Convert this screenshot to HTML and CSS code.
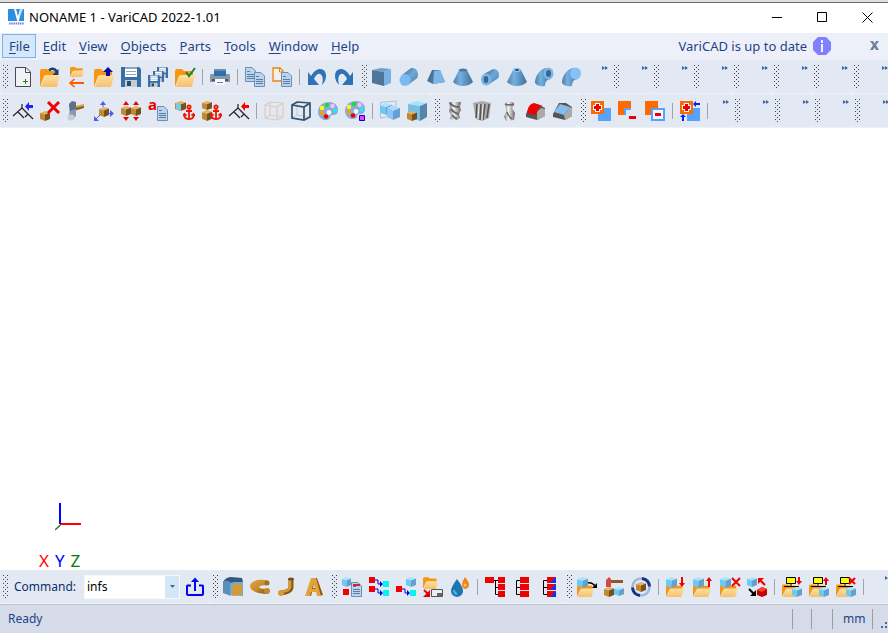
FILE: index.html
```html
<!DOCTYPE html>
<html lang="en">
<head>
<meta charset="utf-8">
<title>NONAME 1 - VariCAD 2022-1.01</title>
<link rel="stylesheet" href="styles.css">
</head>
<body>
<svg class="defs" width="0" height="0" aria-hidden="true">
  <defs>
    <linearGradient id="g-steel"><stop offset="0" stop-color="#4f7fa8"/><stop offset=".35" stop-color="#74b0e2"/><stop offset="1" stop-color="#456f94"/></linearGradient>
    <linearGradient id="g-steel-d" x1="0" y1="0" x2="1" y2="1"><stop offset="0" stop-color="#3f678a"/><stop offset=".5" stop-color="#6ea9da"/><stop offset="1" stop-color="#4a7aa3"/></linearGradient>
    <linearGradient id="g-gold" x1="0" y1="0" x2="1" y2="1"><stop offset="0" stop-color="#e6a945"/><stop offset=".5" stop-color="#c98a2b"/><stop offset="1" stop-color="#7c5010"/></linearGradient>
    <linearGradient id="g-metal"><stop offset="0" stop-color="#777"/><stop offset=".4" stop-color="#f4f4f4"/><stop offset="1" stop-color="#666"/></linearGradient>
    <linearGradient id="g-fold" x1="0" y1="0" x2="0" y2="1"><stop offset="0" stop-color="#fde0a0"/><stop offset="1" stop-color="#f7bf6c"/></linearGradient>
    <symbol id="folder" viewBox="0 0 20 20" preserveAspectRatio="none"><path d="M0 20V4l1-2h6l2 2h9v5H4z" fill="#f7960f"/><path d="M5 8h15l-3 12H1z" fill="url(#g-fold)"/></symbol>
    <symbol id="cube" viewBox="0 0 10 10" preserveAspectRatio="none"><path d="M0 2l5-2 5 1.500-5 2z" fill="#a6e6ff"/><path d="M0 2l5 1.500V10L0 8z" fill="#6cc8f4"/><path d="M5 3.500l5-2V8l-5 2z" fill="#68a0cc"/></symbol>
    <symbol id="brown" viewBox="0 0 10 10" preserveAspectRatio="none"><path d="M0 2l5-2 5 1.500-5 2z" fill="#e2b263"/><path d="M0 2l5 1.500V10L0 8z" fill="#c18a32"/><path d="M5 3.500l5-2V8l-5 2z" fill="#74501c"/></symbol>
    <symbol id="sheet" viewBox="0 0 11 15"><path d="M.5.5h6.500l3.500 3.500v10.500H.5z" fill="#bcd3ea" stroke="#6a8fb8"/><path d="M2 4.500h3M2 7.500h7M2 9.500h7M2 11.500h7" stroke="#557da8"/></symbol>
    <symbol id="anchor" viewBox="0 0 12 16"><g fill="none" stroke="#f01400" stroke-width="1.800"><circle cx="6" cy="2.500" r="1.600"/><path d="M6 4v11M3 6.500h6M1.500 9.500v2.500q1 2.700 4.500 2.700t4.500-2.700V9.500"/><path d="M0 11.500l1.500-2 2 1.500M12 11.500l-1.500-2-2 1.500"/></g></symbol>
    <symbol id="disk" viewBox="0 0 20 20"><path d="M0 0h18l2 2v18H0z" fill="#386fa5"/><path d="M4 0h12v10H4z" fill="#fff"/><path d="M4 0h12v2H4zM5 4h10v1H5zM5 7h10v1H5z" fill="#8fa6bb"/><path d="M4 13h12v7H4z" fill="#c5ccd2"/><path d="M6 14h4v5H6z" fill="#264e75"/></symbol>
    <symbol id="palette" viewBox="0 0 20 18" preserveAspectRatio="none"><path d="M0 10C0 4 5 0 11 0s9 4 9 8-2 5-5 5-3 2-3 3-3 3-6 2-6-4-6-8z" fill="#87acd9"/><circle cx="9" cy="3" r="2" fill="#12e312"/><circle cx="14.500" cy="4" r="2.200" fill="#f7bfff"/><circle cx="4" cy="6" r="2.200" fill="#ff0"/><circle cx="17" cy="8.500" r="2.200" fill="#26e8ef"/><circle cx="4" cy="11" r="2.200" fill="#f2a20d"/><circle cx="11" cy="10.500" r="2.400" fill="#f3f6fb"/><circle cx="8" cy="14.500" r="2.300" fill="#f00000"/></symbol>
    <symbol id="more" viewBox="0 0 6 4"><path d="M0 0l3 2-3 2zM3 0l3 2-3 2z" fill="#3e67a3"/></symbol>
  </defs>
</svg>

<div class="app">
  <header class="titlebar">
    <svg class="logo" width="17" height="18" viewBox="0 0 17 18"><path d="M0 1h16v12H0z" fill="#2c8ee0"/><path d="M7 1l3 11 3-11" fill="none" stroke="#fff" stroke-width="2"/><path d="M12 1l-1 9 4-9" fill="#c0dcf5"/><path d="M1 15.500h15" stroke="#7777ea" stroke-width="2" stroke-dasharray="1.500 .7"/></svg>
    <h1 class="title">NONAME 1 - VariCAD 2022-1.01</h1>
    <div class="window-buttons">
      <button aria-label="Minimize"><svg width="11" height="11"><path d="M0 5.500h10" stroke="#000"/></svg></button>
      <button aria-label="Maximize"><svg width="11" height="11"><path d="M.5.5h9v9h-9z" fill="none" stroke="#000"/></svg></button>
      <button aria-label="Close"><svg width="11" height="11"><path d="M.5.500l10 10m0-10l-10 10" stroke="#000"/></svg></button>
    </div>
  </header>

  <nav class="menubar">
    <button class="menu active"><u>F</u>ile</button>
    <button class="menu"><u>E</u>dit</button>
    <button class="menu"><u>V</u>iew</button>
    <button class="menu"><u>O</u>bjects</button>
    <button class="menu"><u>P</u>arts</button>
    <button class="menu"><u>T</u>ools</button>
    <button class="menu"><u>W</u>indow</button>
    <button class="menu"><u>H</u>elp</button>
    <span class="update">VariCAD is up to date</span>
    <button class="info" aria-label="Update information"><svg width="18" height="18"><path d="M5 0h8l5 5v8l-5 5H5l-5-5V5z" fill="#8080ff"/><path d="M8 3h2v3H8zM8 7h2v8H8z" fill="#f0f2fc"/></svg></button>
    <button class="close-doc" aria-label="Close document"><svg width="9" height="9"><path d="M0 0h3l1.500 2.500L6 0h3L6 4l3 5H6L4.500 6.500 3 9H0l3-5z" fill="#6c829f"/></svg></button>
  </nav>

  <div class="toolbar" role="toolbar" aria-label="File and solids">
    <div class="group">
      <i class="handle"></i>
      <button class="tool" aria-label="New"><svg viewBox="0 0 20 20"><path d="M2.500.5H13L17.500 5v14.500h-15z" fill="#f0f2f5" stroke="#4a4a4a"/><path d="M12.500.5v5h5" fill="none" stroke="#4a4a4a"/><path d="M10 14.500h5M12.500 12v5" stroke="#23801b"/></svg></button>
      <button class="tool" aria-label="Open"><svg viewBox="0 0 20 20"><use href="#folder"/><path d="M9 3.500q4-4 8 1" fill="none" stroke="#173d80" stroke-width="2.500"/><path d="M18.500 2v6h-6z" fill="#173d80"/></svg></button>
      <button class="tool" aria-label="Open previous"><svg viewBox="0 0 20 20"><use href="#folder" x="3" y="-1" width="14" height="11"/><path d="M3 16h14" stroke="#ff5a00" stroke-width="2"/><path d="M7.500 12L3 16l4.500 4" fill="none" stroke="#ff5a00" stroke-width="1.600"/></svg></button>
      <button class="tool" aria-label="Insert from file"><svg viewBox="0 0 20 20"><use href="#folder"/><path d="M14 0l5 5h-3v4h-4V5H9z" fill="#0b0ba8"/></svg></button>
      <button class="tool" aria-label="Save"><svg viewBox="0 0 20 20"><use href="#disk"/></svg></button>
      <button class="tool" aria-label="Save all"><svg viewBox="0 0 20 20"><use href="#disk" x="9" width="11" height="11"/><use href="#disk" x="5" y="4" width="11" height="11"/><use href="#disk" y="8" width="12" height="12"/></svg></button>
      <button class="tool" aria-label="Save and check"><svg viewBox="0 0 20 20"><use href="#folder"/><path d="M11 5l3 4 6-8" fill="none" stroke="#16882c" stroke-width="2"/></svg></button>
      <i class="sep"></i>
      <button class="tool" aria-label="Print"><svg viewBox="0 0 20 20"><path d="M4 2h12v6H4z" fill="#6f8eaa"/><path d="M1 7h18q1 0 1 2v6H0V9q0-2 1-2z" fill="#8b97a5"/><path d="M4 4h12v5H4z" fill="#2c70b3"/><path d="M2 12h16v2H2z" fill="#445565"/><path d="M5 12h10v6H5z" fill="#f5f7ff"/><path d="M7 15h6v1H7z" fill="#6d73d8"/></svg></button>
      <i class="sep"></i>
      <button class="tool" aria-label="Copy"><svg viewBox="0 0 20 20"><use href="#sheet" width="11" height="15"/><use href="#sheet" x="9" y="5" width="11" height="15"/></svg></button>
      <button class="tool" aria-label="Paste"><svg viewBox="0 0 20 20"><path d="M1 1h7l3 3v10H1z" fill="#f2efeb" stroke="#f08010" stroke-width="1.300"/><path d="M7.500 1v4H11" fill="none" stroke="#f08010"/><use href="#sheet" x="9" y="5" width="11" height="15"/></svg></button>
      <i class="sep"></i>
      <button class="tool" aria-label="Undo"><svg viewBox="0 0 20 20"><path d="M1 5l3 4C7 4 10 2 13 2c4 0 6 3 6 7 0 4-2 7-4 9 1-4 1-7 0-9-2-4-6-2-8 3l5 6H1z" fill="#2f72b5"/></svg></button>
      <button class="tool" aria-label="Redo"><svg viewBox="0 0 20 20"><path d="M19 5l-3 4C13 4 10 2 7 2 3 2 1 5 1 9c0 4 2 7 4 9-1-4-1-7 0-9 2-4 6-2 8 3l-5 6h11z" fill="#2f72b5"/></svg></button>
    </div>
    <div class="group">
      <i class="handle"></i>
      <button class="tool" aria-label="Box"><svg viewBox="0 0 20 20"><path d="M0 3l9-2 10 1-7 3z" fill="#6ca3d0"/><path d="M0 3l12 2v14L0 16z" fill="#4e7696"/><path d="M12 5l7-3v14l-7 3z" fill="#77b3e6"/></svg></button>
      <button class="tool" aria-label="Cylinder"><svg viewBox="0 0 20 20"><path d="M3 8l9-7q6-1 7 6 0 4-2 5l-8 6z" fill="url(#g-steel-d)"/><ellipse cx="6" cy="13" rx="5.500" ry="6" fill="#7bbaf0"/></svg></button>
      <button class="tool" aria-label="Pyramid"><svg viewBox="0 0 20 20"><path d="M6 3h8l5 12-12 2-6-3z" fill="#4b7496"/><path d="M8 4l6-1 5 12-12 2z" fill="#79b7eb"/></svg></button>
      <button class="tool" aria-label="Cone"><svg viewBox="0 0 20 20"><path d="M6 3q4-2 8 0l6 12q-4 4-10 4T0 15z" fill="url(#g-steel)"/><ellipse cx="10" cy="3" rx="4" ry="1.500" fill="#4a7ca8"/></svg></button>
      <button class="tool" aria-label="Pipe"><svg viewBox="0 0 20 20"><path d="M4 7l9-5q6 0 6 6 0 3-2 4l-9 6z" fill="url(#g-steel-d)"/><ellipse cx="6" cy="12.500" rx="5" ry="6" fill="#79b5e8"/><ellipse cx="6" cy="12.500" rx="2.300" ry="3.500" fill="#3a658c"/></svg></button>
      <button class="tool" aria-label="Hollow cone"><svg viewBox="0 0 20 20"><path d="M6 3q4-3 8 0l6 12q-4 4-10 4T0 15z" fill="url(#g-steel)"/><ellipse cx="10" cy="3" rx="4" ry="2" fill="#84c3fa"/><ellipse cx="10" cy="3" rx="2" ry="1" fill="#214b72"/></svg></button>
      <button class="tool" aria-label="Elbow pipe"><svg viewBox="0 0 20 20"><path d="M1 16C1 8 7 0 15 1l2 11c-4 0-6 3-6 7q-7 1-10-3z" fill="url(#g-steel)"/><ellipse cx="14.500" cy="6.500" rx="5" ry="6" fill="#7ab7ec"/><ellipse cx="14.500" cy="6.500" rx="2.500" ry="3.500" fill="#3a658c"/></svg></button>
      <button class="tool" aria-label="Elbow"><svg viewBox="0 0 20 20"><path d="M1 16C1 8 7 0 15 1l2 11c-4 0-6 3-6 7q-7 1-10-3z" fill="url(#g-steel)"/><ellipse cx="14.500" cy="6.500" rx="5.500" ry="6" fill="#83c1f7"/></svg></button>
      <button class="more" aria-label="More"><svg><use href="#more"/></svg></button>
    </div>
    <div class="group compact"><i class="handle"></i><button class="more" aria-label="More"><svg><use href="#more"/></svg></button></div>
    <div class="group compact"><i class="handle"></i><button class="more" aria-label="More"><svg><use href="#more"/></svg></button></div>
    <div class="group compact"><i class="handle"></i><button class="more" aria-label="More"><svg><use href="#more"/></svg></button></div>
    <div class="group compact"><i class="handle"></i><button class="more" aria-label="More"><svg><use href="#more"/></svg></button></div>
    <div class="group compact"><i class="handle"></i><button class="more" aria-label="More"><svg><use href="#more"/></svg></button></div>
    <div class="group compact"><i class="handle"></i><button class="more" aria-label="More"><svg><use href="#more"/></svg></button></div>
    <div class="group compact"><i class="handle"></i><button class="more" aria-label="More"><svg><use href="#more"/></svg></button></div>
  </div>

  <div class="toolbar" role="toolbar" aria-label="Editing and display">
    <div class="group">
      <i class="handle"></i>
      <button class="tool" aria-label="Select solids"><svg viewBox="0 0 20 20"><path d="M9 3v4L0 15M9 7l11 11M5 11l6 6M15 13l-3 3" fill="none" stroke="#222" stroke-width="1.200"/><path d="M12 5.500L16 1v3h4v3h-4v3z" fill="#2222ff"/></svg></button>
      <button class="tool" aria-label="Delete"><svg viewBox="0 0 20 20"><use href="#brown" y="10" width="10" height="10"/><path d="M8 1l11 11M19 1L8 12" stroke="#f00000" stroke-width="3"/></svg></button>
      <button class="tool" aria-label="Edit solid"><svg viewBox="0 0 20 20"><path d="M7 5l10-2v3L7 9z" fill="#d9a852"/><path d="M7 7l10-2v2L7 10z" fill="#8b6020"/><path d="M2 3l3-3 4 1v11l-6 2z" fill="#5a7190"/><path d="M3 10l6-2v7l-4 4-4-2z" fill="#8e9aae"/><ellipse cx="4" cy="16.500" rx="3.500" ry="3" fill="#c4ccd9"/></svg></button>
      <button class="tool" aria-label="Move"><svg viewBox="0 0 20 20"><use href="#brown" x="5" y="6" width="10" height="10"/><g stroke="#5757f5" fill="#5757f5"><path d="M9 6V3M14 12.500h4M6 14l-4 4" fill="none"/><path d="M6 4l3-4 3 4zM16 9l4 3.500-4 3.500zM0 20v-5l5 5z" stroke="none"/></g></svg></button>
      <button class="tool" aria-label="Align"><svg viewBox="0 0 20 20"><use href="#brown" y="5" width="10" height="10"/><use href="#brown" x="10" y="5" width="10" height="10"/><path d="M2 4l3-4 3 4zM12 4l3-4 3 4zM2 16h6l-3 4zM12 16h6l-3 4z" fill="#f00000"/></svg></button>
      <button class="tool" aria-label="Attributes"><svg viewBox="0 0 20 20"><text x="0" y="9" class="glyph-a">a</text><use href="#sheet" x="9" y="5" width="11" height="15"/></svg></button>
      <button class="tool" aria-label="Fix solid"><svg viewBox="0 0 20 20"><use href="#brown" width="11" height="10"/><path d="M1 2l5 2v6L1 8z" fill="#73cdf2"/><use href="#anchor" x="8" y="3" width="12" height="17"/></svg></button>
      <button class="tool" aria-label="Fix group"><svg viewBox="0 0 20 20"><use href="#brown" width="10" height="9"/><use href="#brown" y="9" width="10" height="11"/><use href="#anchor" x="8" y="3" width="12" height="17"/></svg></button>
      <button class="tool" aria-label="Deselect solids"><svg viewBox="0 0 20 20"><path d="M9 3v4L0 15M9 7l11 11M5 11l6 6M15 13l-3 3" fill="none" stroke="#222" stroke-width="1.200"/><path d="M12 5.500L16 1v3h4v3h-4v3z" fill="#fa0000"/></svg></button>
      <i class="sep"></i>
      <button class="tool" aria-label="Wireframe"><svg viewBox="0 0 20 20"><path d="M1 4l5-3 13 1v14l-6 3-12-2zM1 4l12 2 6-4M13 6v13M6 1v13l13 2M6 14l-5 3" fill="none" stroke="#dbccc4" stroke-width="1.200"/></svg></button>
      <button class="tool" aria-label="Outline"><svg viewBox="0 0 20 20"><path d="M6 2v12l13 2M6 14l-5 3" fill="none" stroke="#c0cdd9"/><path d="M1 4l5-3 13 1v14l-6 3-12-2zM1 4l12 2 6-4M13 6v13" fill="none" stroke="#34536f" stroke-width="1.700"/></svg></button>
      <button class="tool" aria-label="Colours"><svg viewBox="0 0 20 20"><use href="#palette" y="1" width="20" height="18"/></svg></button>
      <button class="tool" aria-label="Solid colour"><svg viewBox="0 0 20 20"><use href="#palette" width="20" height="18"/><path d="M14.500 14.500h5v5h-5z" fill="#f53cf5" stroke="#0000e8"/></svg></button>
      <i class="sep"></i>
      <button class="tool" aria-label="Show parts"><svg viewBox="0 0 20 20"><path d="M.5 1.500L16 0v14L.5 17z" fill="none" stroke="#b9bec6"/><use href="#cube" y="2" width="12" height="12"/><path d="M7 7l6-3 7 3-7 3z" fill="#abd9ff"/><path d="M7 7l6 3v9l-6-3z" fill="#8bc5fa"/><path d="M13 10l7-3v9l-7 3z" fill="#689fd1"/></svg></button>
      <button class="tool" aria-label="Part selection"><svg viewBox="0 0 20 20"><path d="M1 3l8-3 11 2-7 3z" fill="#a2e5ff"/><path d="M1 3l12 2v15L1 16z" fill="#7abde5"/><path d="M13 5l7-3v14l-7 4z" fill="#5685a8"/><use href="#brown" y="10" width="10" height="10"/></svg></button>
    </div>
    <div class="group">
      <i class="handle"></i>
      <button class="tool" aria-label="Drill"><svg viewBox="0 0 20 20"><path d="M4 1h12l-1 5 1 3-2 4 1 4-5 3-5-2 1-4-2-4 1-4z" fill="url(#g-metal)"/><path d="M5 2q3 4 9 4M6 8q3 4 8 5M7 14q2 3 5 4" fill="none" stroke="#666" stroke-width="2"/></svg></button>
      <button class="tool" aria-label="Mill"><svg viewBox="0 0 20 20"><path d="M1 2l9-2 9 2-2 15-7 3-6-2z" fill="#aaa"/><path d="M5 3L4 17M9 3L8 19M13 3l-2 16M17 3l-2 14" stroke="#555" stroke-width="1.500"/><path d="M7 3L6 18M11 3l-1 16" stroke="#eee"/></svg></button>
      <button class="tool" aria-label="Drill with recess"><svg viewBox="0 0 20 20"><path d="M6 2q5-3 9 0v2l-2 3 3 5-1 7-8 1-2-4 2-5V7L6 4z" fill="url(#g-metal)"/><path d="M6 3q4 2 9 0M8 11q1 4 5 7" fill="none" stroke="#666" stroke-width="1.500"/></svg></button>
      <button class="tool" aria-label="Round edge"><svg viewBox="0 0 20 20"><path d="M0 13l4-8q2-3 7-2l8 4v8l-8 4-11-3z" fill="#555"/><path d="M11 11l4-4 4 1v7l-8 4z" fill="#aaa"/><path d="M1 12q1-9 7-10l9 3q-6 1-7 9z" fill="#f20000"/></svg></button>
      <button class="tool" aria-label="Chamfer edge"><svg viewBox="0 0 20 20"><path d="M0 13l6-11 7 0 6 4v9l-7 4-12-3z" fill="#555"/><path d="M11 14l6-8 2 1v8l-7 4z" fill="#aaa"/><path d="M1 11l6-8 10 3-6 8z" fill="#85bdf0"/></svg></button>
    </div>
    <div class="group">
      <i class="handle"></i>
      <button class="tool" aria-label="Add solids"><svg viewBox="0 0 20 20"><path d="M7 7h13v13H7z" fill="#54a3ff"/><path d="M0 0h13v13H0z" fill="#ff6a00"/><path d="M4 2h5v2h2v5H9v2H4V9H2V4h2z" fill="#fff"/><path d="M5 3h3v2h2v3H8v2H5V8H3V5h2z" fill="#f00000"/></svg></button>
      <button class="tool" aria-label="Cut solid"><svg viewBox="0 0 20 20"><path d="M0 0h13v7H6v7H0z" fill="#ff6a00"/><path d="M6 7h7v2H8v5H6z" fill="#54a3ff"/><path d="M11 15h7v3h-7z" fill="#f00000"/></svg></button>
      <button class="tool" aria-label="Cut keeping solid"><svg viewBox="0 0 20 20"><path d="M0 0h13v14H0z" fill="#ff6a00"/><path d="M7 8h12v11H7z" fill="#f5f8ff" stroke="#54a3ff" stroke-width="2"/><path d="M10 12h6v3h-6z" fill="#f00000"/></svg></button>
      <i class="sep"></i>
      <button class="tool" aria-label="Add selectively"><svg viewBox="0 0 20 20"><path d="M7 7h13v13H7z" fill="#54a3ff"/><path d="M13 0h7v7h-7zM0 13h7v7H0z" fill="#e3e9f2"/><path d="M0 0h13v13H0z" fill="#ff6a00"/><path d="M4 2h5v2h2v5H9v2H4V9H2V4h2z" fill="#fff"/><path d="M5 3h3v2h2v3H8v2H5V8H3V5h2z" fill="#f00000"/><path d="M13 3l3-3v2h4v2h-4v2zM3 13l3 3H4v4H2v-4H0z" fill="#0020ff"/></svg></button>
      <i class="sep"></i>
      <button class="more short" aria-label="More"><svg><use href="#more"/></svg></button>
    </div>
    <div class="group compact"><i class="handle"></i><button class="more" aria-label="More"><svg><use href="#more"/></svg></button></div>
    <div class="group compact"><i class="handle"></i><button class="more" aria-label="More"><svg><use href="#more"/></svg></button></div>
    <div class="group compact"><i class="handle"></i><button class="more" aria-label="More"><svg><use href="#more"/></svg></button></div>
    <div class="group compact"><i class="handle"></i><button class="more" aria-label="More"><svg><use href="#more"/></svg></button></div>
  </div>

  <main class="viewport">
    <svg class="axes" width="28" height="28"><path d="M5.500 22L0 27" stroke="#2a7a2a" stroke-width="1.500"/><path d="M5 21h21" stroke="#f00" stroke-width="2"/><path d="M5 0v21" stroke="#00f" stroke-width="2"/></svg>
    <div class="axis-names"><span class="x">X</span><span class="y">Y</span><span class="z">Z</span></div>
  </main>

  <div class="toolbar" role="toolbar" aria-label="Command and parts">
    <div class="group">
      <i class="handle"></i>
      <label class="command-label" for="command">Command:</label>
      <div class="combo">
        <input id="command" type="text" value="infs">
        <button aria-label="Command history"><svg width="5" height="3"><path d="M0 0h5L2.500 3z" fill="#3e67a3"/></svg></button>
      </div>
      <button class="tool" aria-label="Run command"><svg viewBox="0 0 20 20"><path d="M6 8.500H2.500q-.5 0-.5.500v8q0 1 1 1h14q1 0 1-1V9q0-.5-.5-.5H14" fill="none" stroke="#00f" stroke-width="2"/><path d="M10 14V4" stroke="#00f" stroke-width="2"/><path d="M6 5l4-4.500L14 5z" fill="#00f"/></svg></button>
    </div>
    <div class="group">
      <i class="handle"></i>
      <button class="tool" aria-label="Extrude"><svg viewBox="0 0 20 20"><path d="M0 5q3-5 8-5l11 1 1 4-12 1z" fill="#355a78"/><path d="M0 5q4-3 8 1v13l-8-3z" fill="#5b8fb8"/><path d="M7 18V9q0-4 5-4h8v14z" fill="#6dacdf"/><path d="M9 19v-8q0-4 4-4h6v11z" fill="#d59a38"/></svg></button>
      <button class="tool" aria-label="Revolve"><svg viewBox="0 0 20 20"><path d="M19 4C9 1 0 4 0 9s8 8 18 8v-5c-6 0-9-1-9-2s4-2 10-2z" fill="url(#g-gold)"/><circle cx="17" cy="6" r="2.500" fill="#a0701f"/><circle cx="17" cy="14" r="3" fill="#c48a30"/></svg></button>
      <button class="tool" aria-label="Sweep"><svg viewBox="0 0 20 20"><path d="M14 2v8q0 5-11 6" fill="none" stroke="#8a5b14" stroke-width="5"/><path d="M13 2v8q0 4-10 5" fill="none" stroke="#d99b38" stroke-width="2.500"/><ellipse cx="14" cy="2" rx="3" ry="1.500" fill="#7b5114"/><circle cx="4" cy="16" r="3" fill="#d59a39"/></svg></button>
      <button class="tool" aria-label="3D text"><svg viewBox="0 0 20 20"><path d="M2 19L8 1h5l6 17-4 1-2-4H8l-1 4zM9 11h3l-2-6z" fill="#875912"/><path d="M1 19L7 1h5l5 18h-4l-1-4H7l-1 4zM8 12h3L9.500 6z" fill="#e3a23b"/></svg></button>
    </div>
    <div class="group">
      <i class="handle"></i>
      <button class="tool" aria-label="Part list"><svg viewBox="0 0 20 20"><use href="#cube" width="9" height="10"/><path d="M1 12h6v6H1z" fill="#f00000"/><use href="#sheet" x="9" y="5" width="11" height="15"/><path d="M11 7h7v2h-7z" fill="#e02020"/></svg></button>
      <button class="tool" aria-label="Replace all"><svg viewBox="0 0 20 20"><path d="M0 0h6v6H0zM0 9h6v6H0z" fill="#f00000"/><path d="M14 4h6v6h-6zM14 13h6v6h-6z" fill="#00f5f5"/><path d="M6 3h3v4h4M6 12h3v4h4" fill="none" stroke="#00d"/><path d="M11 4l3 3-3 3zM11 13l3 3-3 3z" fill="#00d"/></svg></button>
      <button class="tool" aria-label="Replace part"><svg viewBox="0 0 20 20"><use href="#cube" x="10" width="10" height="10"/><path d="M0 9h6v6H0z" fill="#f00000"/><path d="M14 13h6v6h-6z" fill="#00f5f5"/><path d="M6 12h3v4h4" fill="none" stroke="#00d"/><path d="M11 13l3 3-3 3z" fill="#00d"/></svg></button>
      <button class="tool" aria-label="Part to drawing"><svg viewBox="0 0 20 20"><use href="#folder" x="0" y="-1" width="15" height="13"/><path d="M1 13l5 5" stroke="#f00000" stroke-width="2"/><path d="M7 13v7H0z" fill="#d00"/><path d="M8.500 12.500h11v7h-11z" fill="#eee" stroke="#555"/><path d="M14 16h5v3h-5z" fill="#666"/></svg></button>
      <button class="tool" aria-label="Material"><svg viewBox="0 0 20 20"><path d="M7 2q6 8 6 12 0 5-6 6-6-1-6-6Q1 10 7 2z" fill="#1d78b0"/><path d="M4 13q0 3 3 4" fill="none" stroke="#54b6e4" stroke-width="2"/><path d="M15 0q4 5 4 8 0 3-4 4-3-1-3-4 0-3 3-8z" fill="#f28218"/><circle cx="15" cy="8" r="1.500" fill="#ffc365"/></svg></button>
      <i class="sep"></i>
      <button class="tool" aria-label="Assembly tree"><svg viewBox="0 0 20 20"><path d="M0 0h9v6H0zM13 0h7v6h-7zM13 7h7v6h-7zM13 14h7v6h-7z" fill="#f00000"/><path d="M9 3.500h4M10.500 3.500v14H13M10.500 10.500H13" fill="none" stroke="#000"/></svg></button>
      <button class="tool" aria-label="Part tree"><svg viewBox="0 0 20 20"><path d="M8 0h9v6H8zM8 7h9v6H8zM8 14h9v6H8z" fill="#f00000"/><path d="M8 3.500H4.500v14H8M4.500 10.500H8" fill="none" stroke="#000"/></svg></button>
      <button class="tool" aria-label="Changed parts tree"><svg viewBox="0 0 20 20"><path d="M8 0h9v6H8zM8 7h9v6H8zM8 14h9v6H8z" fill="#f00000"/><path d="M17 0v6h-6zM17 7v6h-6zM17 14v6h-6z" fill="#0038ff"/><path d="M8 3.500H4.500v14H8M4.500 10.500H8" fill="none" stroke="#000"/></svg></button>
    </div>
    <div class="group">
      <i class="handle"></i>
      <button class="tool" aria-label="Insert part"><svg viewBox="0 0 20 20"><use href="#folder" y="6" width="17" height="14"/><use href="#cube" width="11" height="11"/><path d="M11 6q4-1 7 3" fill="none" stroke="#000" stroke-width="1.500"/><path d="M20 6v5h-5z"/></svg></button>
      <button class="tool" aria-label="Edit part"><svg viewBox="0 0 20 20"><path d="M4 3h15v3H4z" fill="#8b5b27"/><path d="M2 3l3-3 2 2v8H2z" fill="#d94444"/><use href="#brown" y="10" width="10" height="10"/><use href="#cube" x="10" y="10" width="10" height="9"/></svg></button>
      <button class="tool" aria-label="Update part"><svg viewBox="0 0 20 20"><circle cx="10" cy="10" r="8.500" fill="none" stroke="#9bb9df" stroke-width="2.500"/><path d="M11 1.500q7 1 7.500 8M9 18.500q-7-1-7.500-8" fill="none" stroke="#143582" stroke-width="3"/><use href="#brown" x="5" y="5" width="10" height="10"/></svg></button>
      <i class="sep"></i>
      <button class="tool" aria-label="Save part"><svg viewBox="0 0 20 20"><use href="#folder" y="6" width="18" height="14"/><use href="#cube" width="11" height="11"/><path d="M15 0h2v6h2l-3 4-3-4h2z" fill="#f00000"/></svg></button>
      <button class="tool" aria-label="Load part"><svg viewBox="0 0 20 20"><use href="#folder" y="6" width="18" height="14"/><use href="#cube" width="11" height="11"/><path d="M15 10V4h-2l3-4 3 4h-2v6z" fill="#f00000"/></svg></button>
      <button class="tool" aria-label="Break link"><svg viewBox="0 0 20 20"><use href="#folder" y="6" width="18" height="14"/><use href="#cube" width="11" height="11"/><path d="M12 1l8 8M20 1l-8 8" stroke="#f00000" stroke-width="2"/></svg></button>
      <button class="tool" aria-label="Swap parts"><svg viewBox="0 0 20 20"><use href="#cube" width="10" height="10"/><path d="M10 13l5-3 5 2v6l-5 2-5-2z" fill="#c40000"/><path d="M10 13l5 2 5-3-5-2z" fill="#ff4030"/><path d="M18 8l-5-5" stroke="#f00000" stroke-width="2"/><path d="M11 1h6l-6 6z" fill="#f00000"/><path d="M2 12l5 5" stroke="#000" stroke-width="2"/><path d="M9 13v6H3z"/></svg></button>
      <i class="sep"></i>
      <button class="tool" aria-label="Save assembly"><svg viewBox="0 0 20 20"><use href="#folder" y="6" width="18" height="14"/><path d="M4.500.5h9v6h-9z" fill="#ff0" stroke="#000"/><path d="M9 7v3M2 9.500h15" stroke="#000"/><path d="M16 0h2v4h2l-3 4-3-4h2z" fill="#f00000"/><use href="#cube" x="10" y="10" width="10" height="10"/></svg></button>
      <button class="tool" aria-label="Load assembly"><svg viewBox="0 0 20 20"><use href="#folder" y="6" width="18" height="14"/><path d="M4.500.5h9v6h-9z" fill="#ff0" stroke="#000"/><path d="M9 7v3M2 9.500h15" stroke="#000"/><path d="M16 8V4h-2l3-4 3 4h-2v4z" fill="#f00000"/><use href="#cube" x="10" y="10" width="10" height="10"/></svg></button>
      <button class="tool" aria-label="Break assembly"><svg viewBox="0 0 20 20"><use href="#folder" y="6" width="18" height="14"/><path d="M4.500.5h9v6h-9z" fill="#ff0" stroke="#000"/><path d="M9 7v3M2 9.500h15" stroke="#000"/><path d="M13 1l6 6M19 1l-6 6" stroke="#f00000" stroke-width="2"/><use href="#cube" x="10" y="10" width="10" height="10"/></svg></button>
      <i class="sep"></i>
      <button class="more" aria-label="More"><svg><use href="#more"/></svg></button>
    </div>
  </div>

  <footer class="statusbar">
    <span class="message">Ready</span>
    <span class="cell narrow"></span>
    <span class="cell"></span>
    <span class="cell units">mm</span>
    <span class="cell grip"><svg width="10" height="8"><path d="M8 0h2v2H8zM4 4h2v2H4zM8 4h2v2H8z" fill="#3e67a3"/></svg></span>
  </footer>
</div>
</body>
</html>
```
FILE: styles.css
```css
* {
  box-sizing: border-box;
}

body {
  margin: 0;
  background: #fff;
  color: #1d4489;
  font: 12px/16px "Noto Sans", "Noto Sans CJK SC", sans-serif;
}

button,
input {
  margin: 0;
  padding: 0;
  border: 0;
  background: none;
  color: inherit;
  font: inherit;
}

svg {
  display: block;
}

.defs {
  position: absolute;
}

.app {
  display: flex;
  flex-direction: column;
  min-height: 100vh;
  overflow: hidden;
}

/* Title bar */
.titlebar {
  display: flex;
  align-items: center;
  height: 33px;
  padding: 1px 15px 0 8px;
  background: linear-gradient(#dedede 2px, #6b6b6b 2px, #6b6b6b 3px, #fff 3px);
}

.logo {
  margin-right: 4px;
}

.title {
  flex: 1;
  margin: 0;
  color: #000;
  font-size: 13px;
  font-weight: 400;
}

.window-buttons {
  display: flex;
  gap: 34px;
}

/* Menu bar */
.menubar {
  display: flex;
  align-items: center;
  height: 27px;
  padding: 0 9px 2px 2px;
  background: #edf0f9;
  font-size: 13px;
}

.menu {
  height: 24px;
  padding: 0 5px 0 6px;
  border: 1px solid transparent;
}

.menu.active {
  border-color: #7cb2e6;
  background: #d5e7f8;
}

.menu u {
  text-underline-offset: 2px;
}

.update {
  margin-left: auto;
}

.info {
  margin-left: 6px;
}

.close-doc {
  margin-left: 39px;
}

/* Toolbars */
.toolbar {
  display: flex;
  height: 34px;
  overflow: hidden;
  background: #edf1f8;
}

.group {
  display: flex;
  flex: none;
  align-items: center;
  height: 33px;
  border-radius: 3px;
  background: #e3e9f2;
}

.group:last-child {
  flex: 1 0 auto;
}

.handle {
  flex: none;
  width: 11px;
  height: 24px;
  padding: 0 2px 0 4px;
  background:
    conic-gradient(from 270deg at 1px 1px, #3c4350 90deg, transparent 0) 0 0 / 4px 4px content-box,
    conic-gradient(from 270deg at 1px 1px, #3c4350 90deg, transparent 0) 2px 2px / 4px 4px content-box;
}

.compact .handle {
  padding: 0 3px;
}

.group:first-child .handle {
  width: 10px;
  padding: 0 2px 0 3px;
}

.tool {
  flex: none;
  width: 27px;
  padding: 0 4px 0 3px;
}

.tool svg {
  width: 20px;
  height: 20px;
  overflow: visible;
}

.sep {
  flex: none;
  width: 8px;
  height: 16px;
  border-right: 4px solid transparent;
  border-left: 3px solid transparent;
  background: #a0a3a8 padding-box;
}

.more {
  flex: none;
  align-self: flex-start;
  width: 26px;
  padding: 6px 3px 0 0;
}

.more svg {
  width: 6px;
  height: 4px;
  margin-left: auto;
}

.more.short {
  width: 20px;
}

.compact .more {
  width: 29px;
}

.glyph-a {
  fill: #f00000;
  font: 700 15px "Noto Sans", sans-serif;
}

/* Drawing area */
.viewport {
  display: flex;
  flex: 1;
  flex-direction: column;
  justify-content: flex-end;
  gap: 20px;
  padding: 0 39px;
}

.axes {
  margin-left: 16px;
}

.axis-names {
  display: flex;
  gap: 6px;
  font-size: 17px;
  line-height: 19px;
}

.x {
  color: #f00;
}

.y {
  color: #00f;
}

.z {
  color: #008000;
}

/* Command bar */
.command-label {
  width: 74px;
  padding-left: 4px;
  color: #0d2f6e;
}

.combo {
  display: flex;
  width: 96px;
  height: 24px;
  margin-right: 2px;
  border: 1px solid #f5f8fc;
  background: #fff;
}

.combo input {
  flex: 1;
  min-width: 0;
  padding-left: 2px;
  color: #000;
  outline: 0;
}

.combo button {
  display: grid;
  place-items: center;
  width: 14px;
  background: #d5e6f7;
}

/* Status bar */
.statusbar {
  display: flex;
  align-items: center;
  height: 29px;
  padding-left: 8px;
  border-top: 1px solid #bfc2cb;
  background: #d5dbe8;
}

.message {
  flex: 1;
}

.cell {
  width: 21px;
  height: 20px;
  border-left: 1px solid #9a9da5;
}

.narrow {
  width: 19px;
}

.units {
  width: 40px;
  padding: 2px 0 0 10px;
}

.grip {
  width: 16px;
  padding: 13px 0 0 4px;
}
```
